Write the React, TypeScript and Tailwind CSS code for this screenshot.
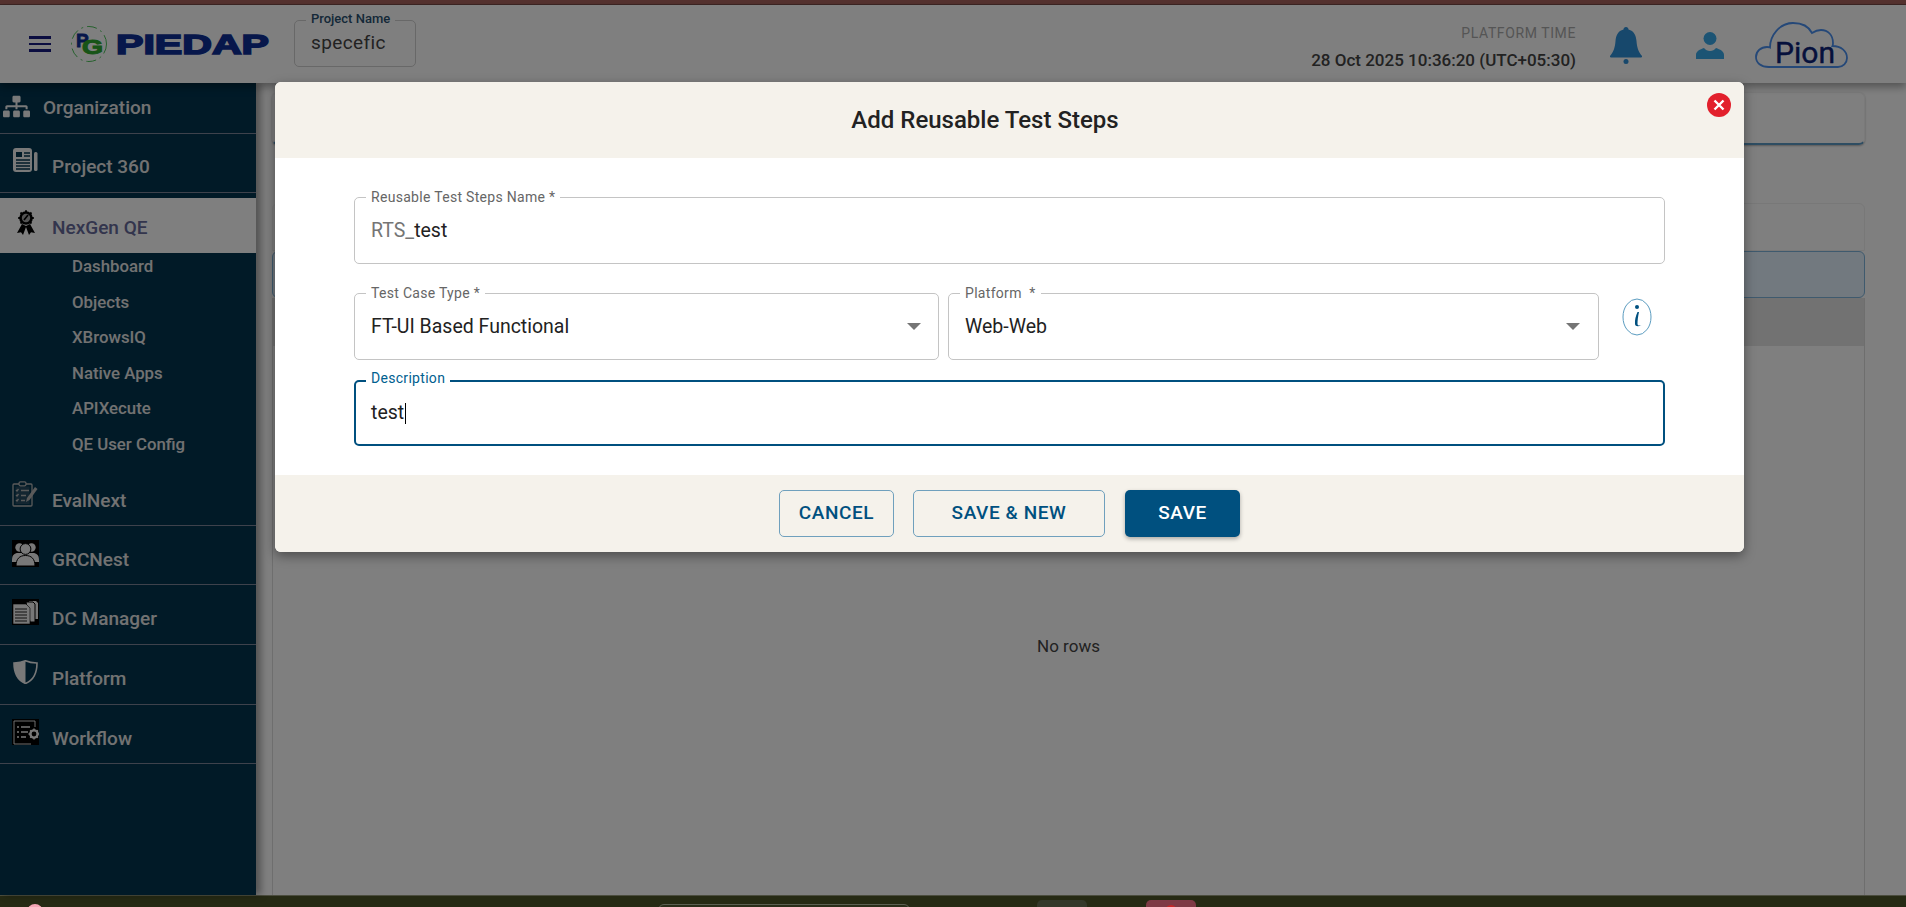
import React from "react";
import { FaSitemap } from "react-icons/fa";

const font = { fontFamily: "Roboto, 'Liberation Sans', sans-serif" };

function ProjectIcon() {
  return (
    <svg width="25" height="25" viewBox="0 0 25 25" fill="none">
      <rect x="0" y="0" width="19" height="24" rx="3" fill="#f2f2f2" />
      <rect x="3" y="4" width="6" height="5" fill="#02344f" />
      <path d="M11 5h6M11 8h6M3 12h14M3 15h14M3 18h14M3 21h14" stroke="#02344f" strokeWidth="1.3" />
      <rect x="21" y="4" width="3.5" height="19" rx="1.5" fill="#f2f2f2" />
    </svg>
  );
}
function AwardIcon() {
  return (
    <svg width="18" height="25" viewBox="0 0 18 25">
      <circle cx="9" cy="8" r="6.800" fill="#000" />
      <path d="M9 .2v2M3.500 2.500l1.400 1.400M14.500 2.500l-1.400 1.400M1.200 8h2M16.800 8h-2M3.500 13.500l1.400-1.400M14.500 13.500l-1.400-1.400" stroke="#000" strokeWidth="1.800" />
      <circle cx="9" cy="8" r="4.200" fill="#a8a8a8" />
      <path d="M7 10l4-5" stroke="#000" strokeWidth="1.600" />
      <path d="M5 14L0 23l4-.8L6 25l3-8 3 8 2-2.800 4 .8-5-9-4 2z" fill="#000" />
    </svg>
  );
}
function EvalIcon() {
  return (
    <svg width="27" height="26" viewBox="0 0 27 26" fill="none" stroke="#b5b5b5" strokeWidth="1.300">
      <rect x="1" y="3" width="19" height="22" rx="1" />
      <rect x="3.500" y="5.500" width="14" height="17.500" fill="#6b7780" stroke="none" opacity="0.35" />
      <rect x="7" y="0.800" width="7" height="4" rx="1.500" fill="#02344f" />
      <path d="M4 9l1 1 1.500-2M4 14l1 1 1.500-2M4 19l1 1 1.500-2M9 9.500h8M9 14.500h5M9 19.500h4" />
      <path d="M14 21l1-4 8-11 2.500 2-8 11z" fill="#b5b5b5" stroke="none" />
    </svg>
  );
}
function UsersIcon() {
  return (
    <svg width="27" height="27" viewBox="0 0 27 27">
      <rect width="27" height="27" fill="#000" />
      <circle cx="7.500" cy="7.500" r="4.200" fill="#f0f0f0" />
      <circle cx="19.500" cy="7.500" r="4.200" fill="#f0f0f0" />
      <path d="M0 20c0-5 2.500-7 6-7h15c3.500 0 6 2 6 7v2H0z" fill="#f0f0f0" />
      <circle cx="13.500" cy="9" r="5.400" fill="#f0f0f0" stroke="#000" strokeWidth="1" />
      <path d="M4 26c0-7 3.500-10.500 9.500-10.500S23 19 23 26z" fill="#f0f0f0" stroke="#000" strokeWidth="1" />
    </svg>
  );
}
function DocsIcon() {
  return (
    <svg width="27" height="26" viewBox="0 0 27 26">
      <rect width="27" height="26" fill="#000" />
      <path d="M17 2h7l2 2v16h-3z" fill="#f0f0f0" />
      <path d="M14 3h7l2 2v18h-5z" fill="#f0f0f0" stroke="#000" strokeWidth="1" />
      <path d="M1 5h13l4 4v16H1z" fill="#f0f0f0" stroke="#000" strokeWidth="0.600" />
      <path d="M3 10h12M3 13h12M3 16h12M3 19h12M3 22h12" stroke="#222" strokeWidth="1.200" />
    </svg>
  );
}
function ShieldIcon() {
  return (
    <svg width="25" height="24" viewBox="0 0 25 24" fill="none">
      <path d="M12.500 0.800C9 2.500 5 3 1 3c0 10 3 17 11.500 20.500C21 20 24 13 24 3c-4 0-8-.5-11.500-2.200z" stroke="#f0f0f0" strokeWidth="1.600" />
      <path d="M12.500 0.800C9 2.500 5 3 1 3c0 10 3 17 11.500 20.500z" fill="#f0f0f0" />
    </svg>
  );
}
function WorkflowIcon() {
  return (
    <svg width="27" height="26" viewBox="0 0 27 26" fill="none">
      <rect width="27" height="26" fill="#000" />
      <path d="M2 25V2h21v6M2 25h17" stroke="#e0e0e0" strokeWidth="1" />
      <path d="M5 8h2M9 8h9M5 13h2M9 13h7M5 18h2M9 18h5" stroke="#f0f0f0" strokeWidth="1.700" />
      <circle cx="22" cy="15" r="3.600" stroke="#f0f0f0" strokeWidth="2.400" />
      <path d="M22 9.500v2M22 18.500v2M16.500 15h2M25.500 15h1.500M18.200 11.200l1.300 1.300M24.500 17.500l1.300 1.300M18.200 18.800l1.300-1.300M24.500 12.500l1.300-1.300" stroke="#f0f0f0" strokeWidth="1.500" />
    </svg>
  );
}

function NavRow({ label, icon, rowClass, iconClass }: { label: string; icon: React.ReactNode; rowClass: string; iconClass: string }) {
  return (
    <div className={`flex items-center border-b border-[#7c8499] ${rowClass}`}>
      <span className={`flex items-center justify-center shrink-0 ${iconClass}`}>{icon}</span>
      <span className="text-[19px] font-medium text-[#e4e4e4] leading-[24px]">{label}</span>
    </div>
  );
}

function Sidebar() {
  const subs = ["Dashboard", "Objects", "XBrowsIQ", "Native Apps", "APIXecute", "QE User Config"];
  return (
    <aside className="w-[256px] shrink-0 bg-[#02344f] flex flex-col z-10 shadow-[5px_0_7px_rgba(0,0,0,0.35)]">
      <NavRow label="Organization" rowClass="h-[51px]" iconClass="w-[27px] ml-[3px] mr-[13px] mb-[4px]" icon={<FaSitemap size={27} color="#f2f2f2" />} />
      <NavRow label="Project 360" rowClass="h-[59px] pt-[8px]" iconClass="w-[25px] ml-[13px] mr-[14px] mb-[13px]" icon={<ProjectIcon />} />
      <div className="h-[55px] mt-[5px] bg-white flex items-center pt-[5px]">
        <span className="w-[18px] ml-[17px] mr-[17px] mb-[11px] shrink-0 flex"><AwardIcon /></span>
        <span className="text-[19px] font-medium text-[#666a9a] leading-[24px]">NexGen QE</span>
      </div>
      <div className="pl-[72px] pt-[3px] flex flex-col gap-[15.6px]">
        {subs.map((s) => (
          <div key={s} className="h-[20px] leading-[20px] text-[16.8px] font-medium text-[#e4e4e4]">{s}</div>
        ))}
      </div>
      <div className="mt-[13px]">
        <NavRow label="EvalNext" rowClass="h-[59px] pt-[10px]" iconClass="w-[27px] ml-[12px] mr-[13px] mb-[14px]" icon={<EvalIcon />} />
        <NavRow label="GRCNest" rowClass="h-[59px] pt-[10px]" iconClass="w-[27px] ml-[12px] mr-[13px] mb-[13px]" icon={<UsersIcon />} />
        <NavRow label="DC Manager" rowClass="h-[60px] pt-[10px]" iconClass="w-[27px] ml-[12px] mr-[13px] mb-[14px]" icon={<DocsIcon />} />
        <NavRow label="Platform" rowClass="h-[60px] pt-[10px]" iconClass="w-[27px] ml-[12px] mr-[13px] mb-[14px]" icon={<ShieldIcon />} />
        <NavRow label="Workflow" rowClass="h-[59px] pt-[10px]" iconClass="w-[27px] ml-[12px] mr-[13px] mb-[14px]" icon={<WorkflowIcon />} />
      </div>
    </aside>
  );
}

function Logo() {
  return (
    <svg width="202" height="36" viewBox="0 0 202 36" className="block">
      <circle cx="18" cy="18" r="17.500" fill="none" stroke="#4cc25a" strokeWidth="1" strokeDasharray="10 4 2 4" />
      <text x="5" y="21" fontFamily="'Liberation Sans'" fontWeight="700" fontSize="19" fill="#0e2f96" stroke="#0e2f96" strokeWidth="0.800">P</text>
      <text x="11" y="28" fontFamily="'Liberation Sans'" fontWeight="700" fontSize="20" fill="#2ea82e" stroke="#2ea82e" strokeWidth="1" textLength="21" lengthAdjust="spacingAndGlyphs">G</text>
      <text x="45" y="28" fontFamily="'Liberation Sans'" fontWeight="700" fontSize="28" fill="#0e2f96" stroke="#0e2f96" strokeWidth="1.600" textLength="153" lengthAdjust="spacingAndGlyphs">PIEDAP</text>
    </svg>
  );
}

function PionLogo() {
  return (
    <svg width="93" height="49" viewBox="0 0 93 49" className="block">
      <path
        d="M14 45C6 45 1 41 1 35c0-6 5-10 11-10 1 0 2 0 3 .5C15 13 25 1 38 1c9 0 16 4 19 10 3-2 6-3 9-3 7 0 12 5 12 13 0 1 0 2-.5 3C86 24 92 29 92 36c0 5-4 9-9 9z"
        fill="none"
        stroke="#4a90f0"
        strokeWidth="1.800"
      />
      <text x="20" y="41" fontFamily="Roboto" fontSize="30" fontWeight="400" fill="#0c2278" stroke="#0c2278" strokeWidth="0.400" textLength="60" lengthAdjust="spacingAndGlyphs">Pion</text>
    </svg>
  );
}

function Header() {
  return (
    <header className="relative z-20 h-[78px] shrink-0 bg-white flex items-start shadow-[0_4px_8px_rgba(0,0,0,0.35)]">
      <div className="flex flex-col gap-[4px] ml-[29px] mt-[31px] w-[22px] shrink-0">
        <span className="h-[2.500px] bg-[#161a80]" />
        <span className="h-[2.500px] bg-[#161a80]" />
        <span className="h-[2.500px] bg-[#161a80]" />
      </div>
      <div className="ml-[20px] mt-[21px]"><Logo /></div>
      <div className="relative ml-[21px] mt-[15px] w-[122px] h-[47px] border border-[#d0d0d0] rounded-[5px] pl-[16px] flex items-center shrink-0">
        <span className="text-[19px] text-[#444444] tracking-[0.4px]">specefic</span>
        <span className="absolute left-[11px] top-[-9px] bg-white px-[5px] text-[13px] leading-[14px] font-medium text-[#2a5070]">Project Name</span>
      </div>
      <div className="ml-auto mt-[20px] flex flex-col items-end">
        <div className="text-[14px] leading-[16px] tracking-[0.6px] text-[#aaaaaa]">PLATFORM TIME</div>
        <div className="text-[17px] leading-[20px] font-medium mt-[9px] text-[#444444]">28 Oct 2025 10:36:20 (UTC+05:30)</div>
      </div>
      <div className="ml-[34px] mt-[22px] shrink-0">
        <svg width="32" height="37" viewBox="0 0 32 37" className="block">
          <path d="M16 0c1.500 0 2.500 1 2.500 2.600C24 4 26 8.500 26.500 14c.5 6 1.500 10 5.500 15 .4.500 0 1.500-1 1.500H1c-1 0-1.400-1-1-1.500 4-5 5-9 5.500-15C6 8.500 8 4 13.500 2.600 13.500 1 14.500 0 16 0z" fill="#2e90d8" />
          <circle cx="16" cy="34.500" r="2.500" fill="#2e90d8" />
        </svg>
      </div>
      <div className="ml-[54px] mt-[27px] shrink-0">
        <svg width="28" height="28" viewBox="0 0 28 28" className="block">
          <circle cx="14" cy="6.500" r="6.500" fill="#38a8e8" />
          <path d="M0 27v-4c0-4 4-5.500 8-7 1.500 2 3.500 3 6 3s4.500-1 6-3c4 1.500 8 3 8 7v4z" fill="#38a8e8" />
        </svg>
      </div>
      <div className="ml-[31px] mr-[58px] mt-[17px] shrink-0"><PionLogo /></div>
    </header>
  );
}

function Main() {
  return (
    <main className="flex-1 min-w-0 bg-white pl-[16px] pr-[41px] pt-[9px] flex flex-col">
      <div className="h-[53px] shrink-0 rounded-[6px] border border-[#f4f4f4] border-b-2 border-b-[#5d9ac4] shadow-[0_1px_2px_rgba(0,0,0,0.3)]" />
      <div className="mt-[58px] flex-1 flex flex-col">
        <div className="h-[48px] shrink-0 rounded-t-[6px] border border-[#f0f0f0]" />
        <div className="h-[47px] shrink-0 rounded-[6px] bg-[#e4f2fe] border border-[#7eb4dc]" />
        <div className="h-[48px] shrink-0 bg-[#e4e4e4] border-x border-[#dddddd]" />
        <div className="flex-1 border-x border-[#dddddd] flex items-center justify-center">
          <div className="text-[17px] text-[#444444] mt-[52px]">No rows</div>
        </div>
      </div>
    </main>
  );
}

function Outlined({ label, className, focused, children }: { label: string; className: string; focused?: boolean; children: React.ReactNode }) {
  return (
    <div className={`relative rounded-[5px] flex items-center ${focused ? "pl-[15px] border-2 border-[#00507f]" : "pl-[16px] border border-[#c4c4c4]"} ${className}`}>
      <span className={`absolute ${focused ? "left-[10px] top-[-12px] text-[#00608f]" : "left-[11px] top-[-9px] text-[#666666]"} bg-white px-[5px] text-[14px] leading-[16px] tracking-[0.3px] whitespace-pre`}>{label}</span>
      {children}
    </div>
  );
}

function Arrow({ className }: { className: string }) {
  return <span className={`w-0 h-0 border-x-[7px] border-x-transparent border-t-[7px] border-t-[#757575] ${className}`} />;
}

function Modal() {
  return (
    <div className="absolute left-[275px] top-[82px] w-[1469px] h-[470px] rounded-[6px] overflow-hidden bg-white flex flex-col shadow-[0_4px_12px_rgba(0,0,0,0.4)]">
      <div className="relative h-[76px] shrink-0 bg-[#f5f2eb] flex items-center justify-center pr-[49px]">
        <h2 className="text-[24px] font-medium text-[#222222]">Add Reusable Test Steps</h2>
        <span className="absolute right-[13px] top-[11px] w-[24px] h-[24px] rounded-full bg-[#e2202c] flex items-center justify-center">
          <svg width="12" height="12" viewBox="0 0 12 12"><path d="M1.500 1.500l9 9M10.500 1.500l-9 9" stroke="#fff" strokeWidth="2.400" /></svg>
        </span>
      </div>
      <div className="flex-1 pt-[39px] pl-[79px] pr-[79px] flex flex-col">
        <Outlined label="Reusable Test Steps Name *" className="h-[67px] shrink-0">
          <span className="text-[19.5px]"><span className="text-[#757575]">RTS_</span><span className="text-[#222222]">test</span></span>
        </Outlined>
        <div className="mt-[29px] flex items-start shrink-0">
          <Outlined label="Test Case Type *" className="w-[585px] h-[67px] shrink-0">
            <span className="text-[19.5px] text-[#222222]">FT-UI Based Functional</span>
            <Arrow className="ml-auto mr-[17px]" />
          </Outlined>
          <Outlined label="Platform  *" className="ml-[9px] w-[651px] h-[67px] shrink-0">
            <span className="text-[19.5px] text-[#222222]">Web-Web</span>
            <Arrow className="ml-auto mr-[18px]" />
          </Outlined>
          <svg width="30" height="38" viewBox="0 0 30 38" className="ml-[23px] mt-[5px] shrink-0">
            <ellipse cx="15" cy="19" rx="14" ry="18" fill="none" stroke="#5b9cc0" strokeWidth="1" />
            <circle cx="15" cy="9" r="2" fill="#00507f" />
            <path d="M15.500 14c-1.800 4-2.800 8-2.500 12 .2 2.400 3 3 6.500 1.300-2.500.5-4 .3-4-1.600 0-3 .5-7.500 1.500-11.700z" fill="#00507f" />
          </svg>
        </div>
        <Outlined label="Description" focused className="mt-[20px] h-[66px] shrink-0">
          <span className="text-[19.5px] text-[#222222] leading-[22px]">test</span>
          <span className="w-px h-[21px] bg-black ml-[1px]" />
        </Outlined>
      </div>
      <div className="h-[77px] shrink-0 bg-[#f5f2eb] flex justify-center pt-[15px] text-[19px] font-medium tracking-[0.6px]">
        <button className="w-[115px] h-[47px] rounded-[5px] border border-[#6fa0bd] text-[#00507f]">CANCEL</button>
        <button className="ml-[19px] w-[192px] h-[47px] rounded-[5px] border border-[#6fa0bd] text-[#00507f]">SAVE &amp; NEW</button>
        <button className="ml-[20px] w-[115px] h-[47px] rounded-[5px] bg-[#00507f] text-white shadow-[0_2px_4px_rgba(0,0,0,0.3)]">SAVE</button>
      </div>
    </div>
  );
}

function Taskbar() {
  return (
    <div className="h-[12px] shrink-0 bg-[#262a14] border-t border-[#4b4d3e] flex items-start overflow-hidden">
      <span className="ml-[27px] mt-[8px] w-[16px] h-[16px] rounded-full bg-[#f5a5b5] shrink-0" />
      <span className="ml-[615px] mt-[8px] w-[252px] h-[10px] rounded-t-[6px] border border-[#5c6052] bg-[#2a2e1a] shrink-0" />
      <span className="ml-[127px] mt-[4px] w-[50px] h-[12px] rounded-t-[5px] bg-[#34382a] shrink-0" />
      <span className="ml-[59px] mt-[4px] w-[50px] h-[12px] rounded-t-[5px] bg-[#7e3a45] flex justify-center shrink-0">
        <span className="w-[12px] h-[12px] mt-[5px] rounded-full bg-[#c62828]" />
      </span>
    </div>
  );
}

export default function App() {
  return (
    <div className="h-[907px] w-[1906px] flex flex-col overflow-hidden" style={font}>
      <div className="relative flex-1 min-h-0 flex flex-col">
        <div className="h-[5px] shrink-0 bg-[#aa645e] border-b border-[#7a4a46]" />
        <Header />
        <div className="flex-1 min-h-0 flex">
          <Sidebar />
          <Main />
        </div>
        <div className="absolute inset-0 z-30 bg-black/50" />
        <div className="absolute inset-0 z-40 pointer-events-none">
          <Modal />
        </div>
      </div>
      <Taskbar />
    </div>
  );
}
